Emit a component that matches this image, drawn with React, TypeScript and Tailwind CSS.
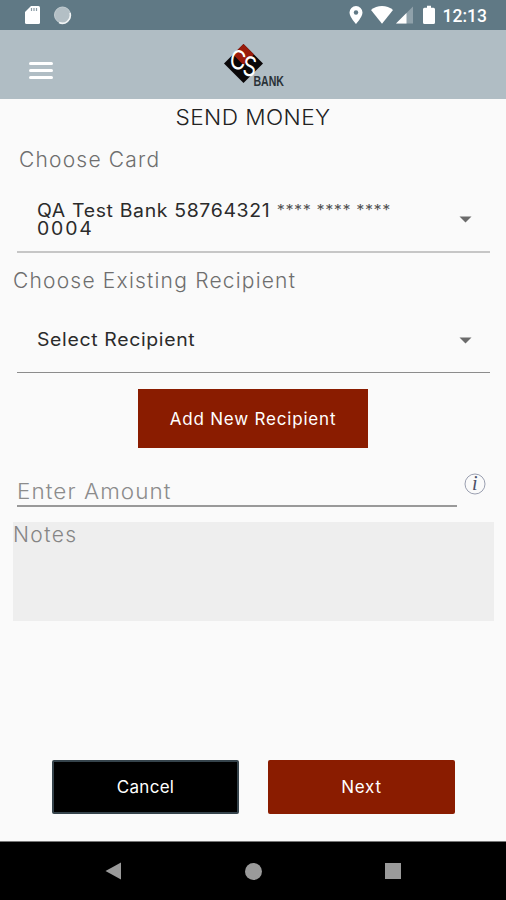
import React from "react";

interface SelectFieldProps {
  value: React.ReactNode;
  lineColor: string;
}

const StatusBar: React.FC = () => {
  return (
    <div className="h-[30px] bg-[#607985] flex items-center justify-between pl-[25px] pr-[19px] shrink-0">
      <div className="flex items-center gap-[13px]">
        {/* SD card */}
        <svg width="16" height="20" viewBox="0 0 16 20">
          <path d="M6 1h7.500a1.500 1.500 0 0 1 1.500 1.500v15a1.500 1.500 0 0 1-1.500 1.500h-12A1.500 1.500 0 0 1 0 17.500V7z" fill="#fff" />
          <path d="M6.500 3v3M9 3v3M11.500 3v3" stroke="#8b9ca5" strokeWidth="1.200" />
        </svg>
        {/* Sync */}
        <svg width="18" height="20" viewBox="0 0 18 20">
          <circle cx="8.500" cy="10" r="8" fill="#b3bfc5" stroke="#c3cdd2" />
          <path d="M16 8a8 8 0 0 1-11 9.500" fill="none" stroke="#f1f4f5" strokeWidth="1.600" />
        </svg>
      </div>
      <div className="flex items-center">
        {/* Location */}
        <svg width="14" height="20" viewBox="0 0 14 20" className="mr-2">
          <path d="M7 1a6.500 6.500 0 0 0-6.500 6.500C.5 12 7 19 7 19s6.500-7 6.500-11.500A6.500 6.500 0 0 0 7 1z" fill="#fff" />
          <circle cx="7" cy="7.500" r="2.200" fill="#607985" />
        </svg>
        {/* Wifi */}
        <svg width="22" height="20" viewBox="0 0 22 20" className="mr-[3px]">
          <path d="M0 5C6-.2 16-.2 22 5L11 18.800z" fill="#fff" />
        </svg>
        {/* Signal */}
        <svg width="17" height="20" viewBox="0 0 17 20" className="mr-[10px]">
          <path d="M17 1.500V18.500H0z" fill="#8fa1aa" />
          <path d="M10.500 8v10.500H0z" fill="#fff" />
        </svg>
        {/* Battery */}
        <svg width="12" height="20" viewBox="0 0 12 20" className="mr-2">
          <path d="M4 .8h4v2h2.500a1.500 1.500 0 0 1 1.500 1.500V17.500a1.500 1.500 0 0 1-1.500 1.500h-9A1.500 1.500 0 0 1 0 17.500V4.300a1.500 1.500 0 0 1 1.500-1.500H4z" fill="#fff" />
        </svg>
        <span className="font-[Roboto] text-[17.5px] leading-[20px] font-medium text-white pt-[2px]">12:13</span>
      </div>
    </div>
  );
};

const Logo: React.FC = () => {
  return (
    <svg width="80" height="52" viewBox="0 0 80 52">
      <path d="M20.500 1L40 20.500 20.500 40 1 20.500z" fill="#0a0708" />
      <path d="M20.500 1L31 11.500 20.500 22 10 11.500z" fill="#9a1b0b" />
      <text x="7" y="26" fontFamily="Inter" fontWeight="400" fontSize="26" textLength="16" lengthAdjust="spacingAndGlyphs" fill="#fff" transform="rotate(8 14 17)">C</text>
      <text x="20" y="33" fontFamily="Inter" fontWeight="400" fontSize="27" textLength="13.500" lengthAdjust="spacingAndGlyphs" fill="#fff" transform="rotate(8 27 24)">S</text>
      <text x="30.500" y="42.500" fontFamily="Liberation Sans" fontWeight="700" fontSize="14.500" textLength="30.500" lengthAdjust="spacingAndGlyphs" fill="#2a3238">BANK</text>
    </svg>
  );
};

const Header: React.FC = () => {
  return (
    <div className="h-[69px] bg-[#b0bdc4] flex items-start pl-[29px] shrink-0">
      <button className="flex flex-col gap-1 mt-[32px] w-6 mr-[170px]">
        <span className="h-[3px] rounded-sm bg-white" />
        <span className="h-[3px] rounded-sm bg-white" />
        <span className="h-[3px] rounded-sm bg-white" />
      </button>
      <div className="mt-[13px]">
        <Logo />
      </div>
    </div>
  );
};

const SelectField: React.FC<SelectFieldProps> = ({ value, lineColor }) => {
  return (
    <div className={`ml-[17px] mr-4 h-[65px] flex items-center justify-between pl-5 pr-[18px] ${lineColor}`}>
      <div className="text-[18px] leading-[18px] tracking-[0.6px] text-[#2b2b2b] origin-left scale-x-[1.08]">{value}</div>
      <svg width="13" height="7" viewBox="0 0 13 7">
        <path d="M.5.5h12l-6 6z" fill="#6b6b6b" />
      </svg>
    </div>
  );
};

const App: React.FC = () => {
  return (
    <div className="w-full h-[900px] bg-[#fafafa] flex flex-col font-[Inter,sans-serif] overflow-hidden">
      <StatusBar />
      <Header />

      {/* Form */}
      <div className="flex-1 flex flex-col">
        <h1 className="text-[21px] leading-6 font-light text-[#222] text-center mt-[7px] tracking-[0.4px] scale-x-[1.077]">SEND MONEY</h1>

        <label className="text-[21px] leading-6 font-light text-[#6e6e6e] ml-[19px] mt-[18px] tracking-[1.2px]">Choose Card</label>
        <div className="mt-[15px] pt-px">
          <SelectField
            lineColor="border-b-2 border-[#c6c6c6]"
            value={
              <>
                <div className="flex items-center whitespace-nowrap">
                  QA Test Bank 58764321
                  <span className="ml-[6px] -mt-[2px] text-[15px] leading-[18px] tracking-[0.5px] text-[#555]">**** **** ****</span>
                </div>
                <div className="tracking-[1.7px]">0004</div>
              </>
            }
          />
        </div>

        <label className="text-[21px] leading-6 font-light text-[#6e6e6e] ml-[13px] mt-4 tracking-[1.2px]">Choose Existing Recipient</label>
        <div className="mt-[15px]">
          <SelectField lineColor="border-b border-[#8c8c8c]" value="Select Recipient" />
        </div>

        <button className="self-center w-[230px] h-[59px] mt-4 pt-[2px] bg-[#8a1c00] text-white text-[17px] tracking-[0.8px]">Add New Recipient</button>

        {/* Amount */}
        <div className="flex items-start mt-[25px] ml-[17px]">
          <div className="w-[440px] h-[34px] border-b-2 border-[#999] text-[21px] leading-6 font-light text-[#8c8c8c] pt-[7px]">
            <div className="origin-left scale-x-[1.07] tracking-[1px]">Enter Amount</div>
          </div>
          <svg width="22" height="22" viewBox="0 0 22 22" className="ml-[7px]">
            <circle cx="11" cy="11" r="10" fill="none" stroke="#9a9fb0" strokeWidth="1" />
            <text x="8" y="17" fontFamily="Liberation Serif" fontStyle="italic" fontSize="20" fill="#4b5068">i</text>
          </svg>
        </div>

        {/* Notes */}
        <div className="ml-[13px] mr-3 mt-[15px] h-[99px] bg-[#eee] text-[21px] leading-[26px] font-light text-[#858585] tracking-[1.4px]">Notes</div>

        {/* Actions */}
        <div className="flex gap-[29px] ml-[52px] mt-[139px]">
          <button className="w-[187px] h-[54px] pt-[2px] rounded-[2px] bg-black border-2 border-[#35434b] text-white text-[17px] tracking-[0.3px]">Cancel</button>
          <button className="w-[187px] h-[54px] pt-[2px] rounded-[2px] bg-[#8a1c00] text-white text-[17px] tracking-[0.8px]">Next</button>
        </div>
      </div>

      {/* Navigation bar */}
      <div className="h-[59px] bg-black border-t border-[#777] flex items-center justify-between pl-[105px] pr-[105px] shrink-0">
        <svg width="16" height="18" viewBox="0 0 16 18">
          <path d="M16 .5v17L.5 9z" fill="#9a9a9a" />
        </svg>
        <span className="w-[17px] h-[17px] rounded-full bg-[#9a9a9a]" />
        <span className="w-4 h-4 bg-[#9a9a9a]" />
      </div>
    </div>
  );
};

export default App;
